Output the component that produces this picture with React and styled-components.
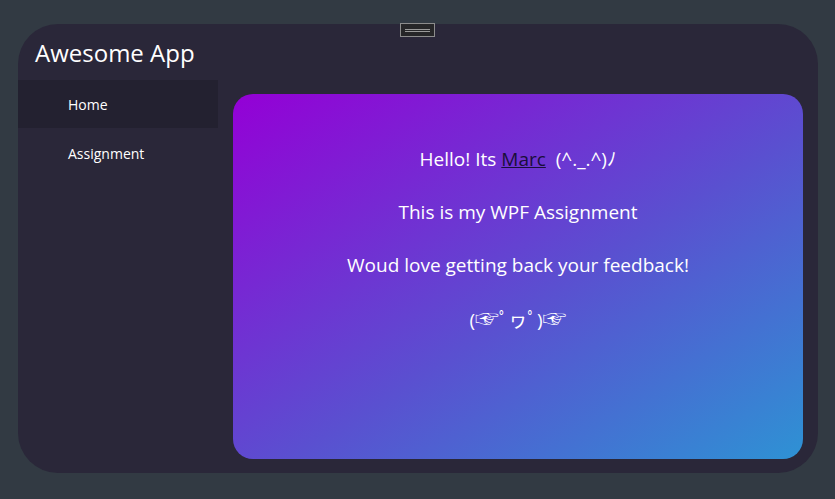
import React from "react";
import styled, { createGlobalStyle } from "styled-components";

const GlobalStyle = createGlobalStyle`
  body {
    margin: 0;
    background: #323a43;
    font-family: "Open Sans", "Noto Sans", "Noto Sans CJK JP", sans-serif;
  }
`;

const Stage = styled.div`
  width: 835px;
  height: 499px;
  padding: 24px 17px 26px 18px;
  box-sizing: border-box;
`;

const Window = styled.div`
  position: relative;
  height: 100%;
  background: #2a2739;
  border-radius: 40px;
  display: flex;
  flex-direction: column;
`;

const Grip = styled.div`
  position: absolute;
  top: -1px;
  left: 382px;
  width: 33px;
  height: 12px;
  border: 1px solid #8c8c8c;
  background: #262628;
  display: flex;
  flex-direction: column;
  justify-content: center;
  align-items: center;
  gap: 1px;
`;

const GripLine = styled.span`
  display: block;
  width: 25px;
  height: 1px;
  background: #9a9a9a;
`;

const Title = styled.h1`
  margin: 0;
  height: 56px;
  padding-left: 17px;
  display: flex;
  align-items: center;
  font-size: 24px;
  font-weight: 400;
  color: #ffffff;
`;

const Body = styled.div`
  flex: 1;
  display: flex;
`;

const Sidebar = styled.nav`
  width: 200px;
  display: flex;
  flex-direction: column;
`;

const NavItem = styled.div`
  height: ${({ $tall }) => ($tall ? "50px" : "48px")};
  padding-left: 50px;
  display: flex;
  align-items: center;
  font-size: 14px;
  color: #ffffff;
  background: ${({ $active }) => ($active ? "#232130" : "transparent")};
`;

const Card = styled.main`
  flex: 1;
  margin: 14px 15px 14px 15px;
  border-radius: 20px;
  background: linear-gradient(to bottom right, #9400d6, #5a50d0 55%, #2e92d4);
  display: flex;
  flex-direction: column;
  align-items: center;
  padding-top: 52px;
  gap: 26px;
  color: #ffffff;
`;

const Line = styled.p`
  margin: 0;
  font-size: 19px;
  line-height: 27px;
  white-space: pre;
`;

const NameLink = styled.a`
  color: #1a0e3a;
  text-decoration: underline;
`;

const Hand = styled.span`
  font-family: "Noto Sans CJK JP", "DejaVu Sans", sans-serif;
  font-size: 24px;
  line-height: 1;
`;

export default function App() {
  return (
    <>
      <GlobalStyle />
      <Stage>
        <Window>
          <Grip>
            <GripLine />
            <GripLine />
          </Grip>
          <Title>Awesome App</Title>
          <Body>
            <Sidebar>
              <NavItem $active>Home</NavItem>
              <NavItem $tall>Assignment</NavItem>
            </Sidebar>
            <Card>
              <Line>
                Hello! Its <NameLink>Marc</NameLink>{"  (^._.^)ﾉ"}
              </Line>
              <Line>This is my WPF Assignment</Line>
              <Line>Woud love getting back your feedback!</Line>
              <Line>
                (<Hand>☞</Hand>ﾟヮﾟ)<Hand>☞</Hand>
              </Line>
            </Card>
          </Body>
        </Window>
      </Stage>
    </>
  );
}
